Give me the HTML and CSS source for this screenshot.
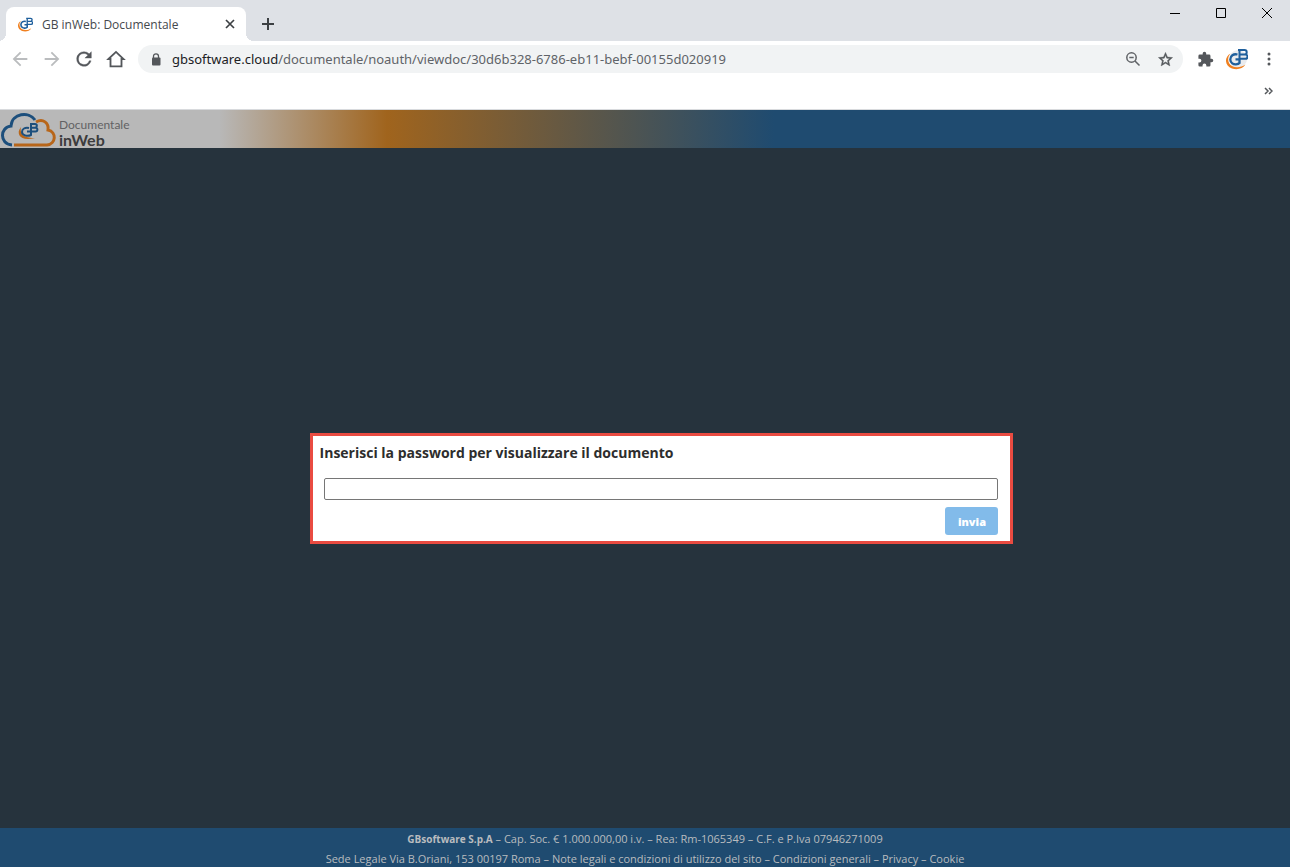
FILE: index.html
```
<!DOCTYPE html>
<html lang="it">
<head>
    <meta charset="UTF-8">
    <meta name="viewport" content="width=device-width, initial-scale=1.0">
    <title>GB inWeb: Documentale</title>
    <link rel="stylesheet" href="styles.css">
</head>
<body>
    <!-- logo GB -->
    <svg class="symbols" aria-hidden="true">
        <symbol id="gb" viewBox="0 0 22 22">
            <path d="M4.500 5.500C-2 9-1.500 18 6 20.500C11 22 17 21 19.500 16.500C15 19.500 10 20 6 18C1.500 15.500 1 9.500 4.500 5.500z" fill="#f08020"/>
            <path d="M11.500 6.500C7.500 5.500 4.200 7.800 4.300 11.500S7.500 16.500 10 16.300C12 16.200 13 15.600 13.500 15V11.300H9.500" fill="none" stroke="#1f5f9c" stroke-width="2.300"/>
            <path d="M13.500 2V10.800H19.300A2.200 2.200 0 0 0 19.300 6.400H13.500H18.500A2.200 2.200 0 0 0 18.500 2H12" fill="none" stroke="#1f5f9c" stroke-width="2"/>
        </symbol>
    </svg>

    <div class="tabs">
        <div class="tab">
            <svg class="favicon"><use href="#gb"/></svg>
            <span class="tab-title">GB inWeb: Documentale</span>
            <button class="icon-btn" aria-label="Chiudi scheda">
                <svg width="10" height="10" viewBox="0 0 10 10" stroke="#3c4043" stroke-width="1.700"><path d="M1 1l8 8M9 1l-8 8"/></svg>
            </button>
        </div>
        <button class="icon-btn new-tab" aria-label="Nuova scheda">
            <svg width="12" height="12" viewBox="0 0 12 12" stroke="#3c4043" stroke-width="2"><path d="M6 0v12M0 6h12"/></svg>
        </button>
        <div class="window-buttons">
            <button class="icon-btn" aria-label="Riduci a icona">
                <svg width="10" height="10" viewBox="0 0 10 10" stroke="#000"><path d="M0 5.500h10"/></svg>
            </button>
            <button class="icon-btn" aria-label="Ingrandisci">
                <svg width="10" height="10" viewBox="0 0 10 10" stroke="#000" fill="none"><path d="M.5.500h9v9h-9z"/></svg>
            </button>
            <button class="icon-btn" aria-label="Chiudi">
                <svg width="10" height="10" viewBox="0 0 10 10" stroke="#000"><path d="M0 0l10 10M10 0l-10 10"/></svg>
            </button>
        </div>
    </div>

    <div class="toolbar">
        <button class="icon-btn" aria-label="Indietro">
            <svg width="22" height="22" viewBox="0 0 24 24" fill="#babcbe"><path d="M20 11H7.830l5.590-5.590L12 4l-8 8 8 8 1.410-1.410L7.830 13H20z"/></svg>
        </button>
        <button class="icon-btn" aria-label="Avanti">
            <svg width="22" height="22" viewBox="0 0 24 24" fill="#babcbe"><path d="M12 4l-1.410 1.410L16.170 11H4v2h12.170l-5.580 5.590L12 20l8-8z"/></svg>
        </button>
        <button class="icon-btn" aria-label="Ricarica">
            <svg width="22" height="22" viewBox="0 0 24 24" fill="#54575b" stroke="#54575b" stroke-width=".4"><path d="M17.650 6.350A7.960 7.960 0 0 0 12 4a8 8 0 1 0 7.730 10h-2.080A6 6 0 1 1 12 6c1.660 0 3.140.690 4.220 1.780L13 11h7V4z"/></svg>
        </button>
        <button class="icon-btn" aria-label="Home">
            <svg width="22" height="22" viewBox="0 0 24 24" fill="none" stroke="#54575b" stroke-width="2"><path d="M3.800 12L12 4.300l8.200 7.700H18v8H6v-8z"/></svg>
        </button>
        <div class="address">
            <svg width="10" height="13" viewBox="0 0 10 13"><path d="M2.500 5V3.300a2.500 2.500 0 0 1 5 0V5" fill="none" stroke="#54575b" stroke-width="1.300"/><rect x="1" y="4.500" width="8.500" height="8" rx="1" fill="#54575b"/></svg>
            <span class="url"><b>gbsoftware.cloud</b>/documentale/noauth/viewdoc/30d6b328-6786-eb11-bebf-00155d020919</span>
            <button class="icon-btn" aria-label="Zoom">
                <svg width="16" height="16" viewBox="0 0 16 16" fill="none" stroke="#606367" stroke-width="1.500"><circle cx="6.500" cy="6.500" r="4.700"/><path d="M10 10l4.500 4.500M4.300 6.500h4.400"/></svg>
            </button>
            <button class="icon-btn" aria-label="Aggiungi ai preferiti">
                <svg width="17" height="17" viewBox="0 0 24 24" fill="#54575b"><path d="M22 9.240l-7.190-.620L12 2 9.190 8.630 2 9.240l5.460 4.730L5.820 21 12 17.270 18.180 21l-1.630-7.030zM12 15.400l-3.760 2.270 1-4.280-3.320-2.880 4.380-.380L12 6.100l1.710 4.040 4.380.380-3.320 2.880 1 4.280z" stroke="#54575b" stroke-width=".6"/></svg>
            </button>
        </div>
        <button class="icon-btn" aria-label="Estensioni">
            <svg width="17" height="17" viewBox="0 0 24 24" fill="#54575b"><path d="M20.500 11H19V7a2 2 0 0 0-2-2h-4V3.500a2.500 2.500 0 0 0-5 0V5H4a2 2 0 0 0-2 2v3.800h1.500a2.700 2.700 0 0 1 0 5.400H2V20a2 2 0 0 0 2 2h3.800v-1.500a2.700 2.700 0 0 1 5.400 0V22H17a2 2 0 0 0 2-2v-4h1.500a2.500 2.500 0 0 0 0-5z"/></svg>
        </button>
        <button class="icon-btn" aria-label="Profilo">
            <svg width="22" height="22" viewBox="0 0 22 22"><circle cx="12" cy="11" r="9" fill="#e9ebee"/><use href="#gb"/></svg>
        </button>
        <button class="icon-btn" aria-label="Menu">
            <svg width="4" height="14" viewBox="0 0 4 14" fill="#54575b"><circle cx="2" cy="2" r="1.500"/><circle cx="2" cy="7" r="1.500"/><circle cx="2" cy="12" r="1.500"/></svg>
        </button>
    </div>
    <div class="bookmarks">
        <button class="icon-btn" aria-label="Altri preferiti">
            <svg width="9" height="8" viewBox="0 0 9 8" fill="none" stroke="#54575b" stroke-width="1.500"><path d="M1 1l3 3-3 3M5 1l3 3-3 3"/></svg>
        </button>
    </div>

    <header class="header">
        <svg class="cloud" width="56" height="38" viewBox="0 0 56 38">
            <g fill="none" stroke-width="3">
                <path d="M11 35C-2 34-1 17 10 16C11 3 28 1 34 10" stroke="#1d4f7c"/>
                <path d="M35 12C42 8 48 13 47 20C56 22 55 34 46 35H13" stroke="#b8661a"/>
            </g>
            <path d="M20 17C14 24 20 32 34 28C26 28 18 26 20 17z" fill="#b8661a"/>
            <g fill="none" stroke="#1d4f7c" stroke-width="2">
                <path d="M28 18C24 17 21 19 21 22S26 27 30 25V21.500H26"/>
                <path d="M30 14V21.500H34.500A1.900 1.900 0 0 0 34.500 17.700H30H34A1.800 1.800 0 0 0 34 14H29"/>
            </g>
        </svg>
        <div class="brand">
            <span class="brand-top">Documentale</span>
            <span class="brand-name">inWeb</span>
        </div>
    </header>

    <main class="content">
        <form class="password-box">
            <label for="password">Inserisci la password per visualizzare il documento</label>
            <input type="password" id="password">
            <button type="submit" class="send">invia</button>
        </form>
    </main>

    <footer class="footer">
        <div><strong>GBsoftware S.p.A</strong> – Cap. Soc. € 1.000.000,00 i.v. – Rea: Rm-1065349 – C.F. e P.Iva 07946271009</div>
        <div>Sede Legale Via B.Oriani, 153 00197 Roma – <a href="#">Note legali e condizioni di utilizzo del sito</a> – <a href="#">Condizioni generali</a> – <a href="#">Privacy</a> – <a href="#">Cookie</a></div>
    </footer>
</body>
</html>
```
FILE: styles.css
```
* {
    box-sizing: border-box;
}

body {
    margin: 0;
    height: 100vh;
    display: flex;
    flex-direction: column;
    overflow: hidden;
    font-family: "Open Sans", "Noto Sans", sans-serif;
    background-color: #26333d;
}

svg {
    display: block;
    flex: none;
}

.symbols {
    position: absolute;
    width: 0;
    height: 0;
}

.icon-btn {
    display: flex;
    align-items: center;
    justify-content: center;
    flex: none;
    width: 32px;
    height: 28px;
    padding: 0;
    border: none;
    background: none;
    cursor: pointer;
}

/* schede */
.tabs {
    display: flex;
    align-items: flex-end;
    flex: none;
    height: 41px;
    padding-left: 6px;
    background-color: #dee1e6;
}

.tab {
    position: relative;
    display: flex;
    align-items: center;
    width: 240px;
    height: 34px;
    padding-left: 12px;
    border-radius: 8px 8px 0 0;
    background-color: #fff;
}

.tab::before,
.tab::after {
    content: "";
    position: absolute;
    bottom: 0;
    width: 8px;
    height: 8px;
}

.tab::before {
    left: -8px;
    background: radial-gradient(circle at 0 0, #dee1e6 8px, #fff 8px);
}

.tab::after {
    right: -8px;
    background: radial-gradient(circle at 100% 0, #dee1e6 8px, #fff 8px);
}

.favicon {
    width: 15px;
    height: 15px;
}

.tab-title {
    flex: 1;
    padding-left: 9px;
    font-size: 12px;
    color: #45494d;
    white-space: nowrap;
}

.new-tab {
    height: 34px;
    margin-left: 6px;
}

.window-buttons {
    display: flex;
    align-self: flex-start;
    margin-left: auto;
}

.window-buttons .icon-btn {
    width: 46px;
    height: 26px;
}

/* barra indirizzi */
.toolbar {
    display: flex;
    align-items: center;
    flex: none;
    height: 36px;
    padding: 0 5px 0 4px;
    background-color: #fff;
}

.address {
    display: flex;
    align-items: center;
    flex: 1;
    min-width: 0;
    height: 28px;
    margin: 0 6px;
    padding: 0 2px 0 13px;
    border-radius: 14px;
    background-color: #f1f3f4;
}

.url {
    flex: 1;
    min-width: 0;
    padding-left: 11px;
    overflow: hidden;
    font-family: "Noto Sans", sans-serif;
    font-size: 13px;
    color: #5f6368;
    white-space: nowrap;
}

.url b {
    font-weight: normal;
    color: #202124;
}

.bookmarks {
    display: flex;
    align-items: center;
    justify-content: flex-end;
    flex: none;
    height: 33px;
    padding: 0 6px 5px 0;
    border-bottom: 1px solid #d8dadd;
    background-color: #fff;
}

/* testata */
.header {
    display: flex;
    align-items: center;
    flex: none;
    height: 38px;
    padding-left: 1px;
    background: linear-gradient(90deg, #b8b8b8 17%, #a0641d 30%, #1f4b70 60%);
}

.brand {
    display: flex;
    flex-direction: column;
    padding: 8px 0 0 2px;
    font-family: Lato, sans-serif;
    color: #3c3c3e;
}

.brand-top {
    font-size: 12px;
    line-height: 14px;
    color: #626264;
}

.brand-name {
    font-size: 16px;
    line-height: 16px;
    font-weight: bold;
}

/* richiesta password */
.content {
    display: flex;
    align-items: center;
    justify-content: center;
    flex: 1;
    padding-left: 33px;
}

.password-box {
    display: flex;
    flex-direction: column;
    width: 56%;
    padding: 7px 12px 6px 7px;
    border: 3px solid #e94b41;
    background-color: #fff;
}

.password-box label {
    font-size: 14px;
    line-height: 20px;
    font-weight: bold;
    color: #2d2d2d;
}

.password-box input {
    height: 22px;
    margin: 15px 0 7px 4px;
    border: 1px solid #767676;
    border-radius: 2px;
}

.send {
    align-self: flex-end;
    width: 53px;
    height: 28px;
    padding: 1px 0 0;
    border: none;
    border-radius: 3px;
    background-color: #82bbea;
    color: #fff;
    font-family: inherit;
    font-size: 11px;
    font-weight: 800;
    cursor: pointer;
}

/* piede */
.footer {
    flex: none;
    height: 39px;
    padding-top: 1px;
    background-color: #1f4b70;
    color: #b9bcbf;
    font-size: 11px;
    line-height: 20px;
    text-align: center;
    white-space: nowrap;
}

.footer strong {
    font-size: 10px;
}

.footer a {
    color: inherit;
    text-decoration: none;
}
```
